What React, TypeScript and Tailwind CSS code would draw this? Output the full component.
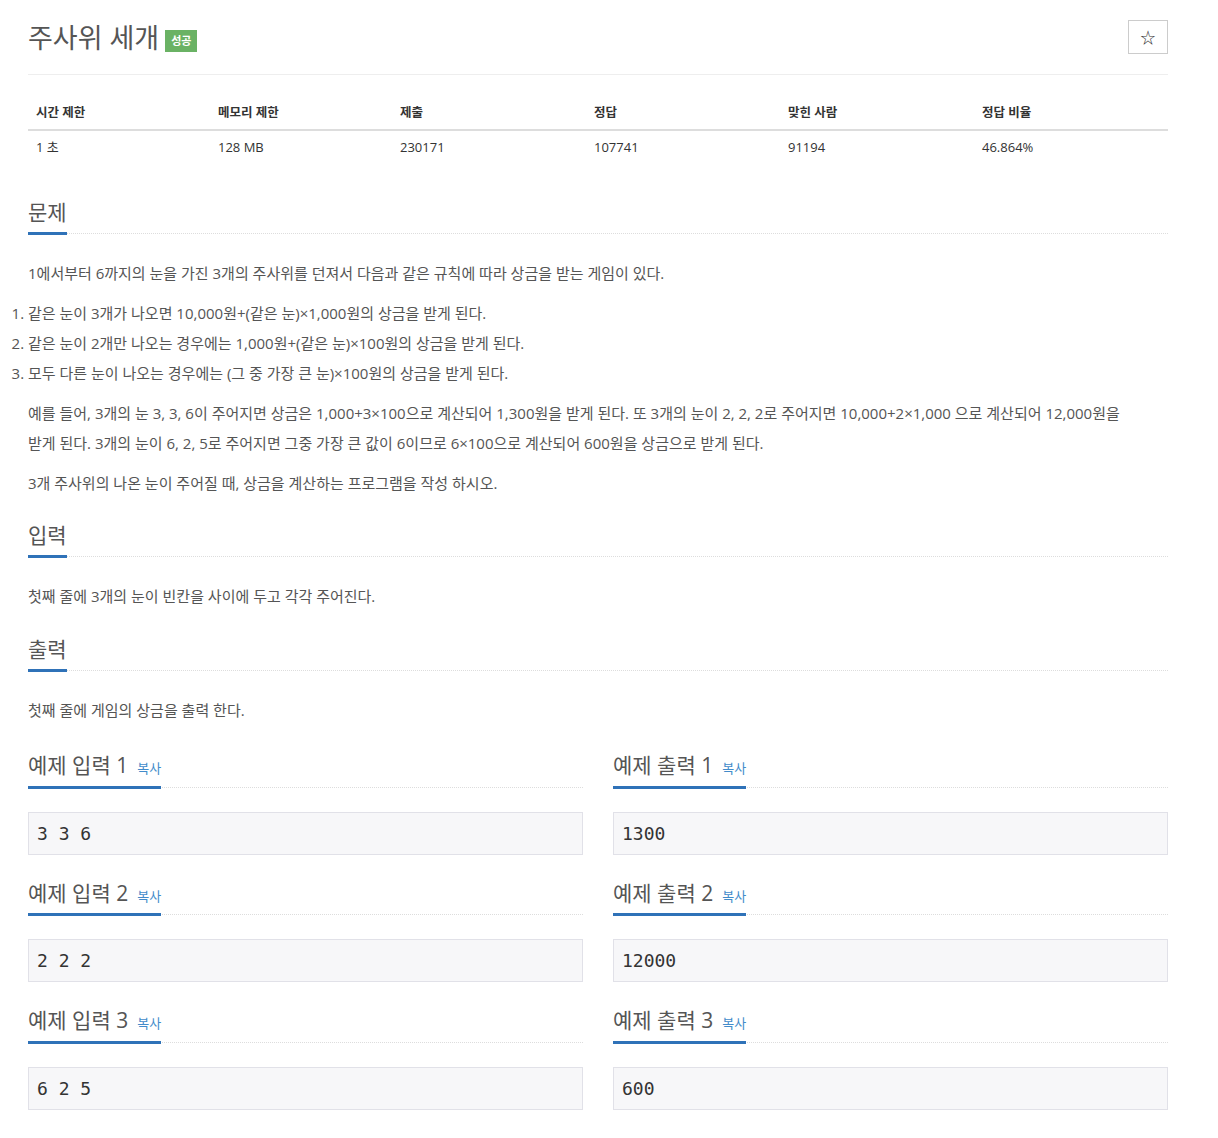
import React from "react";

const SANS = { fontFamily: '"Open Sans", "Noto Sans CJK KR", sans-serif' };

function SectionHead({ title, copy, className = "" }: { title: string; copy?: boolean; className?: string }) {
  return (
    <div className={"border-b border-dotted border-[#dddddd] flex " + className}>
      <div className="border-b-[3px] border-[#2f72b8] -mb-[2px] pb-[7px] flex items-baseline gap-[9px]">
        <span className="text-[21px] leading-[26px] text-[#555555]">{title}</span>
        {copy && <span className="text-[13px] text-[#428bca]">복사</span>}
      </div>
    </div>
  );
}

function Sample({ title, value }: { title: string; value: string }) {
  return (
    <div className="flex flex-col">
      <SectionHead title={title} copy />
      <pre
        className="mt-[24px] bg-[#f7f7f9] border border-[#e1e1e8] px-[8px] py-[8px] text-[18px] leading-[25px] text-[#333333]"
        style={{ fontFamily: '"DejaVu Sans Mono", monospace' }}
      >
        {value}
      </pre>
    </div>
  );
}

export default function App() {
  const heads = ["시간 제한", "메모리 제한", "제출", "정답", "맞힌 사람", "정답 비율"];
  const vals = ["1 초", "128 MB", "230171", "107741", "91194", "46.864%"];
  const widths = ["w-[182px]", "w-[182px]", "w-[194px]", "w-[194px]", "w-[194px]", "w-[194px]"];
  return (
    <div className="bg-white min-h-[1138px] px-[28px] pt-[20px] w-[1196px] break-keep" style={SANS}>
      <div className="w-[1140px]">
        <div className="flex items-start justify-between border-b border-[#eeeeee] pb-[18px]">
          <div className="flex items-center gap-[6px]">
            <h1 className="text-[27px] leading-[36px] text-[#555555] font-normal">주사위 세개</h1>
            <span className="mt-[6px] bg-[#6ab264] text-white text-[11px] font-bold px-[6px] py-[3px] leading-[16px]">성공</span>
          </div>
          <button className="w-[40px] h-[34px] border border-[#cccccc] flex items-center justify-center text-[15px] text-[#333333]">☆</button>
        </div>

        <div className="mt-[29px] text-[12px] text-[#333333]">
          <div className="flex border-b-2 border-[#dddddd] pb-[6px]">
            {heads.map((h, i) => (
              <div key={h} className={widths[i] + " px-[8px] font-bold text-[12.5px]"}>{h}</div>
            ))}
          </div>
          <div className="flex pt-[7px]">
            {vals.map((v, i) => (
              <div key={v} className={widths[i] + " px-[8px] text-[13px]"}>{v}</div>
            ))}
          </div>
        </div>

        <SectionHead title="문제" className="mt-[42px]" />
        <div className="text-[15px] leading-[30px] text-[#555555] mt-[24px]">
          <p className="mb-[10px]">1에서부터 6까지의 눈을 가진 3개의 주사위를 던져서 다음과 같은 규칙에 따라 상금을 받는 게임이 있다.</p>
          <ol className="list-decimal list-outside pl-0 mb-[10px]">
            <li>같은 눈이 3개가 나오면 10,000원+(같은 눈)×1,000원의 상금을 받게 된다.</li>
            <li>같은 눈이 2개만 나오는 경우에는 1,000원+(같은 눈)×100원의 상금을 받게 된다.</li>
            <li>모두 다른 눈이 나오는 경우에는 (그 중 가장 큰 눈)×100원의 상금을 받게 된다.</li>
          </ol>
          <p className="mb-[10px] max-w-[1115px]">예를 들어, 3개의 눈 3, 3, 6이 주어지면 상금은 1,000+3×100으로 계산되어 1,300원을 받게 된다. 또 3개의 눈이 2, 2, 2로 주어지면 10,000+2×1,000 으로 계산되어 12,000원을 받게 된다. 3개의 눈이 6, 2, 5로 주어지면 그중 가장 큰 값이 6이므로 6×100으로 계산되어 600원을 상금으로 받게 된다.</p>
          <p>3개 주사위의 나온 눈이 주어질 때, 상금을 계산하는 프로그램을 작성 하시오.</p>
        </div>

        <SectionHead title="입력" className="mt-[24px]" />
        <p className="text-[15px] leading-[30px] text-[#555555] mt-[24px]">첫째 줄에 3개의 눈이 빈칸을 사이에 두고 각각 주어진다.</p>

        <SectionHead title="출력" className="mt-[25px]" />
        <p className="text-[15px] leading-[30px] text-[#555555] mt-[24px]">첫째 줄에 게임의 상금을 출력 한다.</p>

        <div className="grid grid-cols-2 gap-x-[30px] gap-y-[25px] mt-[27px]">
          <Sample title="예제 입력 1" value="3 3 6" />
          <Sample title="예제 출력 1" value="1300" />
          <Sample title="예제 입력 2" value="2 2 2" />
          <Sample title="예제 출력 2" value="12000" />
          <Sample title="예제 입력 3" value="6 2 5" />
          <Sample title="예제 출력 3" value="600" />
        </div>
      </div>
    </div>
  );
}
